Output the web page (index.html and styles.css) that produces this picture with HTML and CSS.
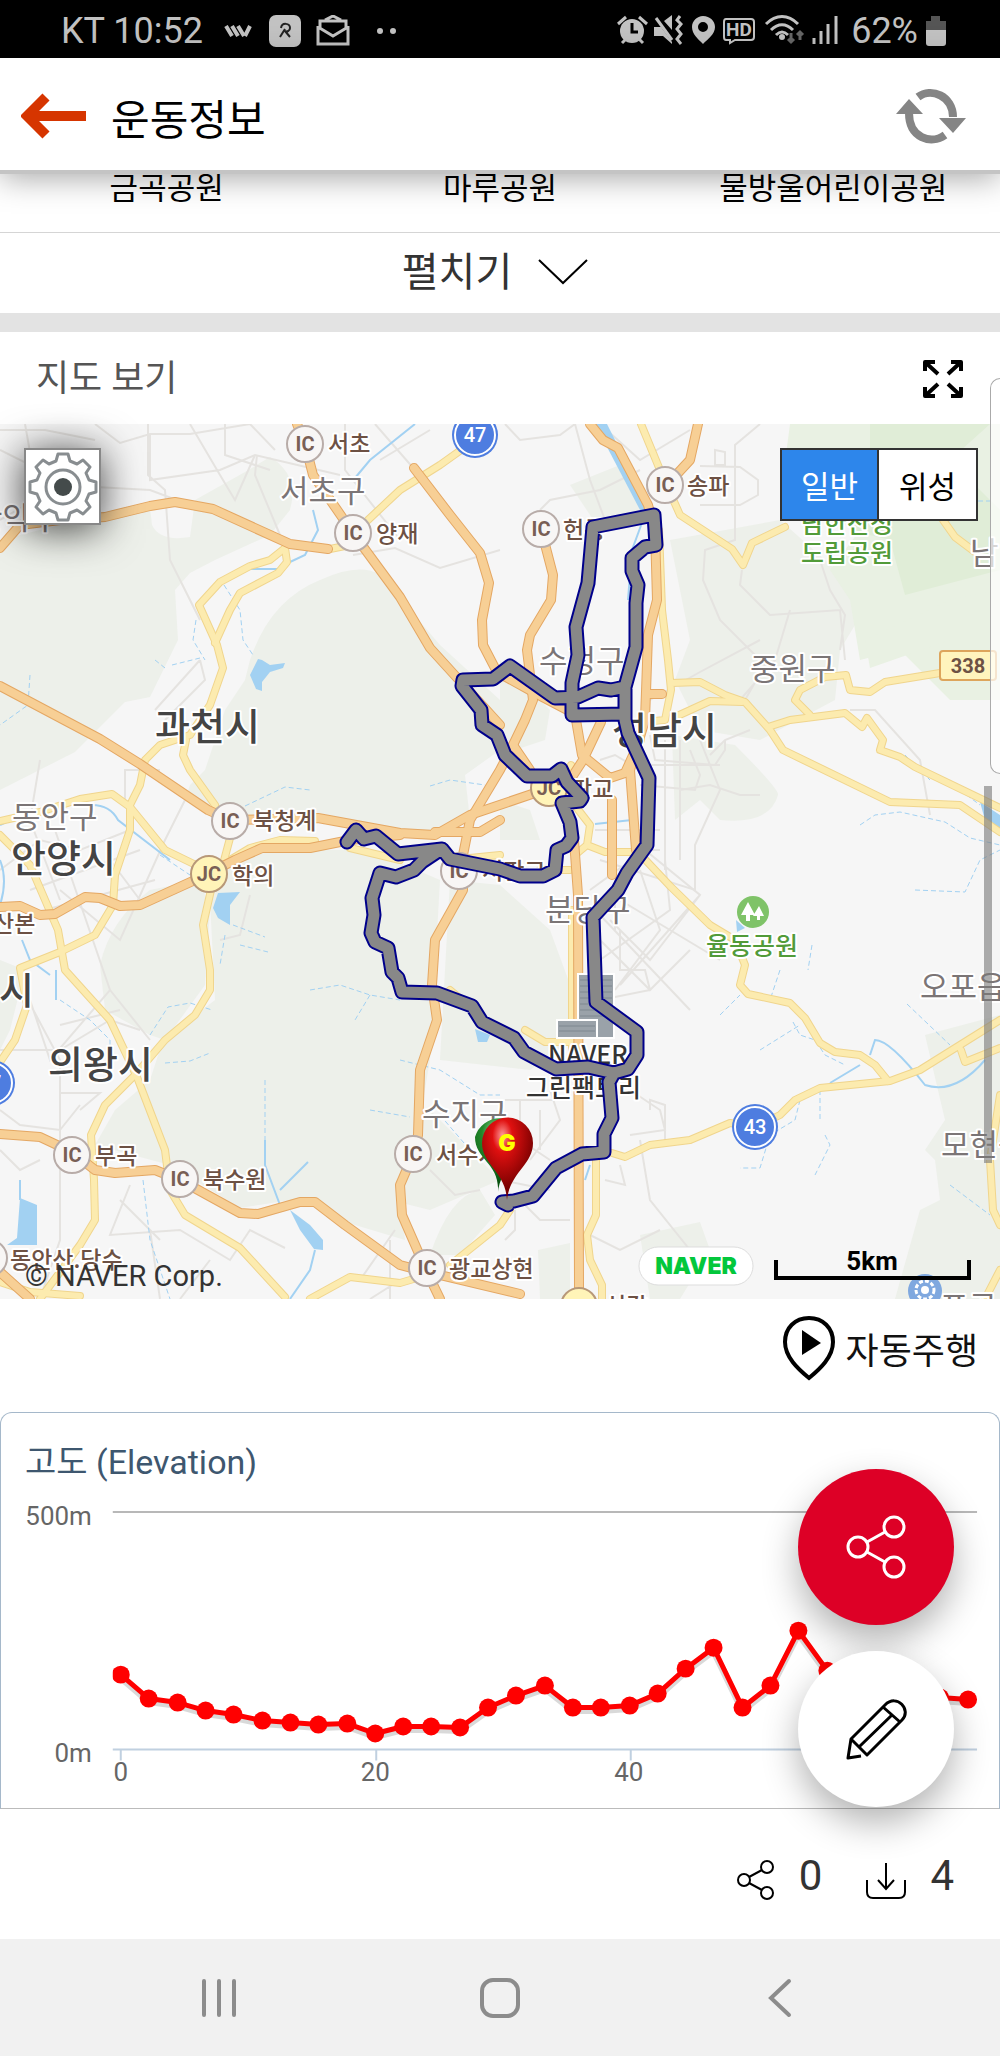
FILE: index.html
```html
<!DOCTYPE html>
<html lang="ko">
<head>
  <meta charset="UTF-8">
  <meta name="viewport" content="width=device-width, initial-scale=1.0">
  <title>운동정보</title>
  <link rel="stylesheet" href="styles.css">
</head>
<body>
  <div class="status-bar">
    <div class="status-group">
      <span>KT 10:52</span>
      <svg class="status-logo" width="28" height="12" viewBox="0 0 28 12" fill="none" stroke="currentColor" stroke-width="4">
        <path d="M2 1l6 10M8 1l6 10M14 1l6 10M21 11l5-10"/>
      </svg>
      <svg width="32" height="32" viewBox="0 0 32 32">
        <rect width="32" height="32" rx="7" fill="currentColor"/>
        <path d="M12 13c1-6 9-5 9 0 0 3-3 4-5 3M16 14l-5 8M16 16l5 6" fill="none" stroke="#222" stroke-width="2"/>
      </svg>
      <svg width="34" height="32" viewBox="0 0 34 32" fill="none" stroke="currentColor" stroke-width="3">
        <path d="M2 11v18h30V11M4 14V6h26v8M2 12l15 9 15-9M9 5l8-4 8 4"/>
      </svg>
      <svg class="status-dots" width="20" height="8" viewBox="0 0 20 8" fill="currentColor">
        <circle cx="3" cy="4" r="3"/><circle cx="16" cy="4" r="3"/>
      </svg>
    </div>
    <div class="status-group status-right">
      <svg width="226" height="32" viewBox="618 15 226 32" fill="currentColor">
        <!-- alarm -->
        <circle cx="633" cy="31" r="12"/>
        <path d="M619 24l8-7M648 24l-8-7M623 43l4-4M644 43l-4-4" stroke="currentColor" stroke-width="3"/>
        <path d="M633 23v9h6" fill="none" stroke="#000" stroke-width="3"/>
        <!-- muted sound -->
        <path d="M655 27h7l11 15v2l-9-8h-9zM665 21l8-6v15z"/>
        <path d="M657 18l16 22" stroke="currentColor" stroke-width="3"/>
        <path d="M681 16l-3 4 4 4-4 5 4 5-4 5 4 5" fill="none" stroke="currentColor" stroke-width="3"/>
        <!-- location -->
        <path fill-rule="evenodd" d="M704 16c7 0 12 5 12 11 0 7-7 12-12 17-5-5-11-10-11-17 0-6 5-11 11-11zm0 6a5 5 0 1 0 0 10 5 5 0 0 0 0-10z"/>
        <!-- hd -->
        <path d="M727 19h25q3 0 3 3v15q0 3-3 3h-16l-5 3v-3h-4q-2 0-2-3V22q0-3 2-3z" fill="none" stroke="currentColor" stroke-width="2"/>
        <text x="727" y="36" class="hd-text">HD</text>
        <!-- wifi -->
        <path d="M767 24c10-10 22-10 32 0M772 30c7-7 15-7 22 0M777 35c4-4 8-4 12 0" fill="none" stroke="currentColor" stroke-width="3"/>
        <circle cx="783" cy="37" r="3"/>
        <path d="M792 33v9m-3-3l3 3 3-3M801 40v-8m-3 3l3-3 3 3" fill="none" stroke="#666" stroke-width="3"/>
        <!-- signal -->
        <path d="M815 38v6M822 31v13M829 24v20M837 16v28" stroke="currentColor" stroke-width="3"/>
      </svg>
      <span>62%</span>
      <svg width="20" height="30" viewBox="0 0 20 30">
        <path d="M0 14V5h5V0h9v5h6v9z" fill="#555"/>
        <path d="M0 14h20v13q0 3-3 3H3q-3 0-3-3z" fill="currentColor"/>
      </svg>
    </div>
  </div>

  <header class="app-header">
    <button class="icon-btn" type="button" aria-label="뒤로">
      <svg width="66" height="46" viewBox="0 0 66 46">
        <path d="M65 23H10M25 4L6 23l19 19" fill="none" stroke="#d63500" stroke-width="10"/>
      </svg>
    </button>
    <h1>운동정보</h1>
    <button class="icon-btn" type="button" aria-label="새로고침">
      <svg width="70" height="56" viewBox="0 0 70 56">
        <path d="M22 9C35-1 57 8 57 29M49 47C35 57 13 50 13 25" fill="none" stroke="#858585" stroke-width="8"/>
        <path d="M43 30h27L57 45zM0 26h27L13 11z" fill="#858585"/>
      </svg>
    </button>
  </header>

  <main>
    <section class="places">
      <span>금곡공원</span>
      <span>마루공원</span>
      <span>물방울어린이공원</span>
    </section>
    <button class="expand-btn" type="button">
      펼치기
      <svg width="50" height="26" viewBox="0 0 50 26" fill="none" stroke="#000" stroke-width="2">
        <path d="M1 1l24 23L49 1"/>
      </svg>
    </button>

    <section class="map-section">
      <div class="map-heading">
        <h2>지도 보기</h2>
        <button class="icon-btn" type="button" aria-label="전체 화면">
          <svg width="42" height="40" viewBox="0 0 42 40" fill="none" stroke="#000" stroke-width="4" stroke-linejoin="round">
            <path d="M16 15L3 3m0 9V3h10M26 15L39 3m-10 0h10v9M16 25L3 37m0-9v9h10M26 25l13 12m-10 0h10v-9"/>
          </svg>
        </button>
      </div>

      <div class="map">
        <svg class="map-canvas" viewBox="0 424 1000 875" role="img" aria-label="운동 경로 지도">
          <rect y="424" width="1000" height="875" fill="#f6f6f6"/>

          <g class="forest">
            <path d="M0 540L100 515 150 507 152 525Q160 542 190 537L195 500 245 472 270 457Q300 475 290 510L270 535 215 560 190 573 175 590 178 640 150 697 125 702 75 752 0 790z"/>
            <path d="M250 660Q270 600 320 580 360 562 380 575L440 645 500 700 500 750 465 775 470 820 430 832 330 822 230 815 200 805 185 800 190 785 205 770 225 710 245 680z"/>
            <path d="M100 965Q110 920 150 890L200 880 210 910 205 985 165 1040 150 1035 105 1010z"/>
            <path d="M240 850H370L440 880 435 970 430 1060 418 1130 400 1190 405 1240 345 1222 310 1197 240 1208 170 1165 95 1145 115 1110 150 1080 163 1040 215 1000 210 900z"/>
            <path d="M450 880L500 885 550 930 572 990V1040L530 1070 440 1060z"/>
            <path d="M500 660L550 710 545 740 515 750 500 730zM500 800L530 810 540 840 500 840z"/>
            <path d="M570 485L620 465 640 510 600 530zM670 540L780 520 870 600 840 650 835 700 760 740 700 730 675 680 690 640z"/>
            <path d="M672 735L735 745Q780 790 778 795 770 825 720 820L700 800 675 820z"/>
            <path d="M925 1035L1000 1015V1299H895L920 1210 940 1200 935 1160 925 1150 945 1120z"/>
            <path d="M640 1235L700 1222 710 1250 680 1299 650 1299zM430 1255Q450 1195 480 1190L495 1215 460 1255zM538 1250L570 1243V1299H540z"/>
            <path d="M0 960L25 970 10 1030 0 1050zM370 1195L430 1110 500 1180 430 1210z"/>
          </g>
          <g class="park">
            <path d="M790 424H1000V700L950 700 900 650 860 660 850 600 830 570 860 530 780 500z"/>
            <path d="M865 640L950 600 1000 590V680L950 640 870 668z"/>
          </g>
          <path d="M870 424H990L950 460 1000 510V570L905 595 890 540 850 530 870 470z" fill="#e0edd7"/>

          <g class="street">
            <path d="M0 430L45 430 95 440M25 424L35 480 80 470M0 520L60 485 150 490 190 505M95 424L120 443 150 434H190L250 424M148 424V475L165 490 170 560 200 620M0 450L100 500M150 434L150 480 220 470 255 455 340 475M190 424L220 475 235 500 255 455M225 424V455L270 470M250 424L275 450M257 455L255 475 280 535M345 424V470L400 540M375 424L415 470M380 460L430 430M353 555L395 548 440 568 500 550"/>
            <path d="M505 424L520 440 560 435 575 424M575 424L590 480 605 520M600 424L640 460 690 430M540 510L550 500 600 490 640 470M700 466L740 467 758 480V495L740 505H700M760 424L735 445V540L705 550 703 580 720 620 765 665 745 700M715 450V465H725V452zM742 570L740 585 770 615 840 610 845 660M820 560L830 590 845 615 840 650M790 610L775 660 740 700M650 700L700 672 760 640"/>
            <path d="M650 735L655 760 715 765 725 750V740M665 740V870M680 740V860M640 765H720M690 750L700 775 695 790 640 785M700 740L720 790 695 845V890L600 860M760 795L740 795 710 785 680 790M750 730L725 740 710 755M850 710L875 710 920 760 930 815"/>
            <path d="M600 760L615 755 640 770M590 890L645 850 700 895 650 960 610 920M600 915L690 1010M620 900L720 960M640 870L660 930 615 990M600 940L650 990 690 950M665 860L670 910 600 960M700 895L620 985M615 870V930M595 830H660M595 850H660M600 1000L650 990 645 970H620V930M630 1090L660 1110 665 1130 630 1135M650 1110V1100L665 1105V1140M640 1140L650 1200 690 1250M605 1180L625 1185 620 1165M590 1235L620 1250 660 1230"/>
            <path d="M505 1100L560 1100M520 1100V1140L550 1160M540 1110V1150M530 1160L560 1120 550 1090M520 1200L540 1220H570M500 1180L550 1190M505 1240L515 1230V1210"/>
            <path d="M40 760L30 820 60 900M55 830L110 990M0 870L40 840 80 850 130 830M30 890L140 850M45 910L155 880M60 890L120 940 165 840 185 800M110 860L140 900M125 800V770L160 770M155 710L200 660M165 720L205 680 200 660M250 895L240 935 220 940M0 1050H60L110 1020 140 1030M30 1000L50 1060 110 990 150 1040M20 985L60 1060V1240L40 1299M0 1110L20 1125 60 1130 80 1105M60 1093H100L80 1110M60 1025L120 1010M0 1150L20 1170 40 1160M130 1185L110 1235 180 1230 230 1260 250 1230 285 1248M210 1260L180 1299M150 1230L160 1299M120 1200L160 1240M390 1240V1299M430 1170L455 1195 480 1190M360 1280L395 1230M400 1280L370 1299"/>
          </g>

          <g class="water">
            <path d="M595 424L607 424 650 510 640 510z"/>
            <path d="M250 675L258 659 262 660 270 665 285 663 283 668 270 672 262 682 262 691 256 689z"/>
            <path d="M213 908L218 893 240 892 230 905V925L218 918zM20 1198L37 1205V1245H7L17 1238zM290 1210L310 1225 323 1240V1250L314 1249 300 1230zM475 1029L490 1035 487 1042 478 1042zM980 802L1000 815V832L985 820zM736 920L745 928 737 932z"/>
          </g>
          <g class="stream">
            <path d="M415 424L370 460 355 478M313 510L318 530 305 555 290 562M245 569H280M643 520L632 550 628 600M92 805Q110 805 118 820L170 860M0 825L15 818M0 860Q8 880 0 905M22 940L30 960 50 975M56 970V1000M20 1180V1200M265 1140V1165L280 1205M280 1190L308 1162M315 1250L310 1270 290 1299M870 1055L875 1040Q890 1040 925 1085 955 1095 985 1060M830 1083L860 1065M595 824L632 820M585 1180L590 1165"/>
          </g>
          <g class="stream stream-dashed">
            <path d="M224 585L240 610 243 640 253 655M196 620L193 640 205 660M155 660L165 668M172 665L200 658M30 675L28 705 0 725M245 806L285 787 310 790M430 786L450 780 485 785M160 855L190 875M225 935L220 965M233 925L265 937M240 945L268 952M165 1063L190 1061 210 1053M150 1035L168 1007 190 1003 212 1010M60 1000L90 1020 110 1040V1060M310 990L340 985 370 995 400 1000M370 995L355 1020M400 1060L440 1070 480 1095H500M370 1110L410 1117M265 1080V1140M143 1180L150 1240 170 1299M440 1115L470 1150"/>
            <path d="M860 825L875 815 900 812 945 822 970 838 1000 845M915 890L965 892 980 860 1000 850M760 1050L800 1025M720 1015L740 995M780 970L770 1000M812 945L808 970M793 1022L800 1035 815 1040 825 1055 845 1065M820 1090L820 1120M800 1100L795 1120 770 1135 760 1168H740M825 1135L830 1145 815 1175M907 1004L950 1045M950 1185L990 1215M905 755L930 780M960 790L980 805M978 501H990"/>
          </g>

          <!-- road edges first, fills on top -->
          <defs>
            <g id="minor-roads">
              <path d="M330 549L345 546M368 520L400 490 440 465 475 440"/>
              <path d="M285 548L270 560 250 566 220 582 199 605 217 645 223 668 210 705 190 735 160 745 145 760 140 785 130 805 130 830 115 875 113 905 95 935 60 952 20 968 27 1005 15 1040 0 1062"/>
              <path d="M285 548L287 562 278 573 240 593 230 610 215 643M186 740L183 755 190 770 215 805"/>
              <path d="M230 838L222 868M211 890L203 925 210 970 210 990 195 1015 165 1040 135 1075 105 1105 91 1135 94 1180 95 1220 80 1245 40 1299"/>
              <path d="M0 821L40 812 80 799 112 794 130 807 165 850 200 867M230 860L250 848 280 840 315 841M350 848L400 860"/>
              <path d="M0 835L30 865 58 930 65 970 110 1020 137 1077 165 1150 170 1190 185 1215 240 1248 285 1297M0 1282L30 1292 80 1296"/>
              <path d="M641 424L660 470 680 515 732 549 743 565 752 543 785 527M943 520L955 537 975 552"/>
              <path d="M659 530L662 610 668 660 671 690 665 720 655 721M671 683L700 682 725 695 745 702 770 730 783 750 890 802 960 805 1000 832M675 717L710 701 742 702"/>
              <path d="M768 727L790 720 845 713 862 727 867 718 883 740 880 750 900 757 915 767 1000 808M810 715L795 700 800 690 825 677 846 675 850 690 870 692 885 682 940 673"/>
              <path d="M571 765L563 790 590 825 587 845 575 855M587 845L605 852H638L670 886 710 925 735 940 745 965 740 985 748 994 790 1003 805 1018 820 1043 835 1052 860 1055 875 1065 888 1081"/>
              <path d="M612 1153L625 1157 650 1145 690 1140 730 1123 755 1127 780 1115 795 1100 820 1088 890 1081 920 1070 1000 1020M961 1050L965 1062 1000 1048M1000 1095L990 1160 993 1210 1000 1225M1000 1270L985 1299"/>
              <path d="M596 1160V1215L587 1235 590 1260 602 1285V1299M310 1299L350 1277 400 1283 427 1275M450 1265L500 1225 510 1210M572 910V1055M450 860L500 855M525 1030L545 1042H573M450 990L480 1015M540 870H570"/>
            </g>
            <g id="major-roads">
              <path d="M0 548L20 525 60 520 105 517 150 506 175 502 213 509 290 544 328 549"/>
              <path d="M297 424L305 444 313 475 353 533 400 597 430 648 500 725"/>
              <path d="M414 468L450 515 480 553 489 583 482 620 483 645 497 672 535 693 575 714 582 755 610 778 625 773 640 740"/>
              <path d="M541 529L553 575 551 600 530 635 527 650 533 700 525 720 513 745 500 770 470 820 462 860 463 890 435 940 432 985 437 1020 420 1070 418 1135 413 1155 400 1185 402 1215 427 1272 440 1299"/>
              <path d="M590 424L603 440 618 448 648 505 655 530 657 600 648 635 645 720 630 770 636 850M698 424L690 460 665 487M648 694H662M513 745L530 770M601 722L583 760 570 780"/>
              <path d="M0 686L100 739 140 764 208 810 230 820 318 818 400 833 435 835 470 815 535 793M435 832L480 832 500 820"/>
              <path d="M0 907L20 906 40 915 55 914 85 897 100 898 120 906 140 905 195 880 235 860 262 848 310 848 350 840 400 835"/>
              <path d="M0 1134L40 1137 72 1152 95 1170 115 1173 155 1170 180 1180 240 1213 258 1214 300 1202 315 1202 345 1225 400 1265 427 1272 520 1294M0 1272L30 1299"/>
              <path d="M612 800V875M574 840L578 895 579 1290"/>
            </g>
          </defs>
          <use href="#minor-roads" class="minor-edge"/>
          <use href="#minor-roads" class="minor-fill"/>
          <use href="#major-roads" class="major-edge"/>
          <use href="#major-roads" class="major-fill"/>

          <!-- interchange badges -->
          <g class="ic">
            <circle cx="305" cy="444" r="18"/><circle cx="353" cy="533" r="18"/><circle cx="541" cy="529" r="18"/>
            <circle cx="665" cy="485" r="18"/><circle cx="230" cy="821" r="18"/><circle cx="459" cy="871" r="18"/>
            <circle cx="72" cy="1155" r="18"/><circle cx="180" cy="1179" r="18"/><circle cx="413" cy="1154" r="18"/>
            <circle cx="427" cy="1268" r="18"/><circle cx="-11" cy="1258" r="18"/>
            <circle class="jc" cx="209" cy="874" r="18"/><circle class="jc" cx="549" cy="788" r="18"/><circle class="jc" cx="579" cy="1306" r="18"/>
          </g>
          <g class="ic-text">
            <text x="305" y="451">IC</text><text x="353" y="540">IC</text><text x="541" y="536">IC</text>
            <text x="665" y="492">IC</text><text x="230" y="828">IC</text><text x="459" y="878">IC</text>
            <text x="72" y="1162">IC</text><text x="180" y="1186">IC</text><text x="413" y="1161">IC</text>
            <text x="427" y="1275">IC</text><text x="209" y="881">JC</text><text x="549" y="795">JC</text>
          </g>
          <g class="label">
            <text x="328" y="452">서초</text><text x="376" y="542">양재</text><text x="563" y="538">헌릉</text>
            <text x="687" y="494">송파</text><text x="253" y="829">북청계</text><text x="232" y="884">학의</text>
            <text x="482" y="879">서판교</text><text x="571" y="797">판교</text><text x="-7" y="932">산본</text>
            <text x="95" y="1164">부곡</text><text x="203" y="1188">북수원</text><text x="436" y="1163">서수지</text>
            <text x="449" y="1277">광교상현</text><text x="10" y="1268">동안산.당수</text><text x="605" y="1314">신갈</text>
          </g>
          <g class="label district">
            <text x="280" y="502">서초구</text><text x="-26" y="529">관악구</text><text x="539" y="672">수정구</text>
            <text x="750" y="680">중원구</text><text x="12" y="828">동안구</text><text x="545" y="921">분당구</text>
            <text x="422" y="1125">수지구</text><text x="920" y="998">오포읍</text><text x="941" y="1156">모현읍</text>
            <text x="970" y="564">남</text><text x="940" y="1318">포곡</text>
          </g>
          <g class="label city">
            <text x="155" y="740">과천시</text><text x="612" y="744">성남시</text><text x="11" y="872">안양시</text>
            <text x="-36" y="1004">흥시</text><text x="48" y="1078">의왕시</text>
          </g>
          <g class="label nature">
            <text x="801" y="533">남한산성</text><text x="801" y="562">도립공원</text><text x="706" y="955">율동공원</text>
          </g>

          <circle cx="753" cy="912" r="16" fill="#7fc368"/>
          <path d="M748 902l7 13h-5v6h-4v-6h-5zM759 906l5 10h-4v4h-3v-4h-4z" fill="#fff"/>

          <g class="route-badge">
            <circle cx="475" cy="435" r="23"/><circle cx="755" cy="1127" r="23"/><circle cx="-8" cy="1083" r="23"/>
            <circle class="ring" cx="475" cy="435" r="20"/><circle class="ring" cx="755" cy="1127" r="20"/><circle class="ring" cx="-8" cy="1083" r="20"/>
            <text x="475" y="442">47</text><text x="755" y="1134">43</text><text x="-10" y="1090">47</text>
          </g>
          <rect x="940" y="651" width="56" height="29" rx="3" fill="#fff4bd" stroke="#dda55c" stroke-width="2"/>
          <text x="968" y="673" class="road-number">338</text>
          <circle cx="925" cy="1291" r="17" fill="#7fa8df"/>
          <circle cx="925" cy="1290" r="9" fill="none" stroke="#fff" stroke-width="3" stroke-dasharray="4 2"/>
          <circle cx="925" cy="1290" r="4" fill="#fff"/>

          <g fill="#9aa2a9" stroke="#fff" stroke-width="2">
            <path d="M578 974H614V1038H578z"/>
            <path d="M557 1020H597V1038H557z"/>
          </g>
          <path d="M580 980h32M580 986h32M580 992h32M580 998h32M580 1004h32M580 1010h32M580 1016h32M559 1026h36M559 1031h36" stroke="#7f8890"/>
          <g class="label landmark">
            <text x="548" y="1064">NAVER</text><text x="526" y="1097">그린팩토리</text>
          </g>

          <defs>
            <path id="track" d="M508 1205L502 1202 514 1201 533 1196 556 1168 582 1154 604 1152 604 1134 612 1118 609 1082 614 1073 628 1069 637 1055V1032L596 1002 593 917 618 890 627 873 647 845 649 778 628 733 625 720V687L636 647V603L638 585 632 571V558L645 547 656 545 654 515 593 527 588 583 576 627 578 655 572 683V715L625 714M625 687L611 690 598 688 578 697 555 698 510 666 493 679 463 680 462 686 481 710 482 725 497 735 505 755 527 776H552L561 769 567 782 582 798 580 801 562 803 570 822 572 838 566 846 557 850 555 870 543 876H520L500 869 450 859 442 849 398 854 376 836 364 839 356 830 347 842M440 850L422 862 414 870 396 877 380 873 372 898 374 915 371 933 375 942 388 948 392 972 398 978 402 992 437 993 472 1006 482 1022 514 1038 524 1052 556 1069 588 1067 614 1073"/>
          </defs>
          <use href="#track" class="track-edge"/>
          <use href="#track" class="track-fill"/>

          <!-- start and goal pins -->
          <defs>
            <radialGradient id="pin-red" cx="40%" cy="22%" r="65%">
              <stop offset="0" stop-color="#ff9c9c"/><stop offset=".3" stop-color="#e01010"/><stop offset="1" stop-color="#780000"/>
            </radialGradient>
            <radialGradient id="pin-green" cx="40%" cy="22%" r="65%">
              <stop offset="0" stop-color="#a6dba6"/><stop offset=".4" stop-color="#228a2b"/><stop offset="1" stop-color="#07520e"/>
            </radialGradient>
          </defs>
          <path d="M498 1192C500 1163 475 1160 475 1137a26 26 0 0 1 50 0C525 1160 501 1165 498 1192z" fill="url(#pin-green)"/>
          <path d="M507 1200C506 1172 482 1165 482 1143a25 25 0 0 1 51 0C533 1165 510 1172 507 1200z" fill="url(#pin-red)"/>
          <text x="507" y="1151" class="pin-letter">G</text>

          <g class="scale">
            <path d="M776 1260v18h193v-18"/>
            <text x="872" y="1270">5km</text>
          </g>
          <text x="25" y="1286" class="copyright">© NAVER Corp.</text>
          <rect x="639" y="1247" width="114" height="38" rx="19" fill="#fff" stroke="#ddd"/>
          <text x="696" y="1274" class="naver-logo">NAVER</text>
        </svg>

        <button class="gear-btn" type="button" aria-label="지도 설정">
          <svg width="70" height="70" viewBox="0 0 70 70" fill="none" stroke="#888d90" stroke-width="3" stroke-linejoin="round">
            <path d="M28 9l2-7h10l2 7 7 3 6-4 7 7-4 6 3 7 7 2v10l-7 2-3 7 4 6-7 7-6-4-7 3-2 7H30l-2-7-7-3-6 4-7-7 4-6-3-7-7-2V30l7-2 3-7-4-6 7-7 6 4z"/>
            <circle cx="35" cy="35" r="17"/>
            <circle cx="35" cy="35" r="9" fill="#444b4b" stroke="none"/>
          </svg>
        </button>
        <div class="map-type">
          <button class="active" type="button">일반</button>
          <button type="button">위성</button>
        </div>
        <div class="edge-panel"></div>
        <div class="scroll-thumb"></div>
      </div>

      <button class="auto-drive" type="button">
        <svg width="54" height="66" viewBox="0 0 54 66">
          <path d="M27 3C13 3 3 13 3 27c0 15 13 27 24 36 11-9 24-21 24-36C51 13 41 3 27 3z" fill="none" stroke="#000" stroke-width="4"/>
          <path d="M20 15l19 13-19 12z"/>
        </svg>
        자동주행
      </button>
    </section>

    <section class="elevation">
      <h2>고도 (Elevation)</h2>
      <svg class="chart" viewBox="0 1488 1000 320" role="img" aria-label="고도 그래프">
        <defs>
          <marker id="dot" markerUnits="userSpaceOnUse" markerWidth="20" markerHeight="20" refX="10" refY="10">
            <circle cx="10" cy="10" r="9" fill="#f00"/>
          </marker>
          <clipPath id="plot"><path d="M112 1500H978V1760H112z"/></clipPath>
        </defs>
        <path d="M112 1511H978" stroke="#b8b8b8" stroke-width="2"/>
        <path d="M112 1749H978M120 1749v11M376 1749v11M631 1749v11" stroke="#c0d0e0" stroke-width="2"/>
        <g clip-path="url(#plot)">
          <polyline class="line-shadow" points="120,1677 148,1701 177,1705 205,1713 233,1717 262,1723 290,1725 318,1727 347,1726 375,1736 403,1729 431,1729 460,1730 488,1710 516,1698 545,1688 573,1710 601,1710 630,1708 658,1696 686,1671 714,1650 743,1710 771,1688 799,1633 828,1673 856,1692 884,1702 912,1702 941,1700 969,1702"/>
          <polyline class="line" points="120,1674 148,1698 177,1702 205,1710 233,1714 262,1720 290,1722 318,1724 347,1723 375,1733 403,1726 431,1726 460,1727 488,1707 516,1695 545,1685 573,1707 601,1707 630,1705 658,1693 686,1668 714,1647 743,1707 771,1685 799,1630 828,1670 856,1690 884,1700 912,1700 941,1697 969,1699"/>
        </g>
        <g class="axis">
          <text x="91" y="1524" text-anchor="end">500m</text>
          <text x="91" y="1762" text-anchor="end">0m</text>
          <text x="120" y="1781" text-anchor="middle">0</text>
          <text x="375" y="1781" text-anchor="middle">20</text>
          <text x="629" y="1781" text-anchor="middle">40</text>
        </g>
      </svg>
      <div class="fabs">
        <button class="fab fab-share" type="button" aria-label="공유">
          <svg width="60" height="64" viewBox="0 0 60 64" fill="none" stroke="currentColor" stroke-width="3">
            <circle cx="12" cy="32" r="10"/><circle cx="48" cy="12" r="10"/><circle cx="48" cy="52" r="10"/>
            <path d="M21 27l18-10M21 37l18 10"/>
          </svg>
        </button>
        <button class="fab" type="button" aria-label="편집">
          <svg width="62" height="62" viewBox="0 0 62 62" fill="none" stroke="#000" stroke-width="3" stroke-linejoin="round">
            <path d="M6 41L40 7c12-12 27 5 17 15L22 57 6 41 3 60l13-2M38 9l17 15M48 16L15 48"/>
          </svg>
        </button>
      </div>
    </section>

    <section class="counts">
      <a href="#share" aria-label="공유 0">
        <svg width="38" height="40" viewBox="0 0 38 40" fill="none" stroke="#000" stroke-width="2">
          <circle cx="7" cy="20" r="6"/><circle cx="30" cy="7" r="6"/><circle cx="30" cy="33" r="6"/>
          <path d="M12 17l13-7M12 23l13 7"/>
        </svg>
        <span>0</span>
      </a>
      <a href="#download" aria-label="다운로드 4">
        <svg width="40" height="40" viewBox="0 0 40 40" fill="none" stroke="#000" stroke-width="2">
          <path d="M20 3v26m-8-9l8 9 8-9M1 20v12q0 6 6 6h26q6 0 6-6V20"/>
        </svg>
        <span>4</span>
      </a>
    </section>
  </main>

  <nav class="system-nav">
    <button type="button" aria-label="최근 앱">
      <svg width="40" height="40" viewBox="0 0 40 40"><path d="M4 3v34M19 3v34M34 3v34"/></svg>
    </button>
    <button type="button" aria-label="홈">
      <svg width="40" height="40" viewBox="0 0 40 40"><rect x="2" y="2" width="36" height="36" rx="11"/></svg>
    </button>
    <button type="button" aria-label="이전">
      <svg width="40" height="40" viewBox="0 0 40 40"><path d="M29 3L11 20l18 17"/></svg>
    </button>
  </nav>
</body>
</html>
```

FILE: styles.css
```css
:root {
  --text: #333;
  --status: #c2c2c2;
  --brand-red: #dd0026;
  --blue: #2d86eb;
  --kr: Roboto, "Noto Sans CJK KR", sans-serif;
}

* {
  margin: 0;
  padding: 0;
  box-sizing: border-box;
}

body {
  font-family: var(--kr);
  background: #fff;
  color: var(--text);
  overflow-x: hidden;
}

button {
  font: inherit;
  color: inherit;
  background: none;
  border: 0;
  cursor: pointer;
}

svg {
  display: block;
  flex-shrink: 0;
}

.status-bar {
  display: flex;
  justify-content: space-between;
  align-items: center;
  height: 58px;
  padding: 4px 54px 0 61px;
  background: #000;
  color: var(--status);
  font-size: 36px;
  line-height: 54px;
}

.status-group {
  display: flex;
  align-items: center;
  gap: 15px;
}

.status-logo {
  margin: 0 2px 0 6px;
}

.status-dots {
  margin-left: 12px;
}

.status-right {
  gap: 8px;
}

.hd-text {
  font-size: 19px;
  font-weight: 700;
}

.app-header {
  display: flex;
  align-items: center;
  height: 116px;
  padding: 4px 34px 0 21px;
  position: relative;
  z-index: 2;
  background: #fff;
  border-bottom: 4px solid #c4c4c4;
  box-shadow: 0 4px 30px rgba(0, 0, 0, 0.35);
}

.app-header h1 {
  flex: 1;
  margin-left: 24px;
  font-size: 42px;
  font-weight: 400;
  color: #000;
}

.places {
  display: grid;
  grid-template-columns: repeat(3, 1fr);
  height: 59px;
  border-bottom: 1px solid #d5d5d5;
  font-size: 31px;
  line-height: 30px;
  text-align: center;
  color: #000;
}

.expand-btn {
  display: flex;
  align-items: center;
  justify-content: center;
  gap: 26px;
  width: 100%;
  height: 80px;
  padding: 0 10px 8px 0;
  font-size: 40px;
}

.expand-btn svg {
  margin-top: 6px;
}

.map-section {
  border-top: 19px solid #e3e3e3;
}

.map-heading {
  display: flex;
  align-items: center;
  justify-content: space-between;
  height: 92px;
  padding: 0 36px 6px;
}

.map-heading h2 {
  font-size: 36px;
  font-weight: 400;
  color: #555;
}

.map-heading svg {
  margin-top: 8px;
}

.map {
  position: relative;
}

.map-canvas {
  width: 100%;
  height: auto;
}

.forest {
  fill: #edf0ea;
}

.park {
  fill: #e9f1e3;
}

.street {
  fill: none;
  stroke: #e5e3e0;
  stroke-width: 2;
}

.water {
  fill: #a2d1f2;
}

.stream {
  fill: none;
  stroke: #a2d1f2;
  stroke-width: 2;
}

.stream-dashed {
  stroke-width: 1;
  stroke-dasharray: 5 3;
}

.minor-edge,
.minor-fill,
.major-edge,
.major-fill,
.track-edge,
.track-fill {
  fill: none;
  stroke-linejoin: round;
  stroke-linecap: round;
}

.minor-edge {
  stroke: #f0d58d;
  stroke-width: 8;
}

.minor-fill {
  stroke: #fcebaf;
  stroke-width: 6;
}

.major-edge {
  stroke: #e4a763;
  stroke-width: 10;
}

.major-fill {
  stroke: #f7cf95;
  stroke-width: 8;
}

.track-edge {
  stroke: #00008b;
  stroke-width: 15;
}

.track-fill {
  stroke: #888;
  stroke-width: 11;
}

.ic circle {
  fill: #f8f6f5;
  stroke: #b8aca8;
  stroke-width: 2;
}

.ic .jc {
  fill: #fff4b8;
  stroke: #b89878;
}

.ic-text {
  font-size: 20px;
  font-weight: 700;
  text-anchor: middle;
  fill: #795f55;
}

.label {
  font-family: "Noto Sans CJK KR", sans-serif;
  font-size: 23px;
  font-weight: 500;
  fill: #6d5144;
  stroke: #fff;
  stroke-width: 4;
  stroke-linejoin: round;
  paint-order: stroke;
}

.district {
  font-size: 31px;
  font-weight: 400;
  fill: #7b7576;
}

.city {
  font-size: 38px;
  fill: #444;
}

.nature {
  font-size: 25px;
  fill: #529b39;
}

.landmark {
  font-size: 25px;
  fill: #333;
}

.route-badge circle {
  fill: #4e7de0;
}

.route-badge .ring {
  fill: none;
  stroke: #fff;
  stroke-width: 2;
}

.route-badge text,
.road-number {
  font-size: 20px;
  font-weight: 500;
  text-anchor: middle;
  fill: #fff;
}

.road-number {
  font-weight: 700;
  fill: #6d5144;
}

.pin-letter {
  font-family: Inter, sans-serif;
  font-size: 23px;
  font-weight: 900;
  text-anchor: middle;
  fill: #ff0;
}

.scale path {
  fill: none;
  stroke: #000;
  stroke-width: 4;
}

.scale text {
  font-size: 26px;
  font-weight: 700;
  text-anchor: middle;
  fill: #000;
}

.copyright {
  font-size: 29px;
  fill: #333;
}

.naver-logo {
  font-family: Inter, sans-serif;
  font-size: 23px;
  font-weight: 900;
  text-anchor: middle;
  fill: #03c73c;
}

/* controls lying over the map */
.gear-btn {
  position: absolute;
  top: 24px;
  left: 24px;
  display: grid;
  place-items: center;
  width: 77px;
  height: 77px;
  background: #fff;
  border: 2px solid #888;
  box-shadow: 0 4px 40px rgba(0, 0, 0, 0.75);
}

.map-type {
  position: absolute;
  top: 24px;
  right: 22px;
  display: flex;
  border: 2px solid #333;
  background: #fff;
  font-size: 31px;
  color: #000;
}

.map-type button {
  width: 97px;
  height: 69px;
}

.map-type .active {
  background: var(--blue);
  border-right: 2px solid #333;
  color: #fff;
}

.edge-panel {
  position: absolute;
  top: -46px;
  right: 0;
  width: 10px;
  height: 396px;
  background: rgba(255, 255, 255, 0.7);
  border: 1px solid #aaa;
  border-right: 0;
  border-radius: 10px 0 0 10px;
}

.scroll-thumb {
  position: absolute;
  top: 362px;
  right: 8px;
  width: 8px;
  height: 377px;
  background: rgba(120, 120, 120, 0.6);
}

.auto-drive {
  display: flex;
  align-items: center;
  gap: 10px;
  height: 113px;
  margin-left: auto;
  padding: 0 22px 16px 0;
  font-size: 36px;
  color: #111;
}

.elevation {
  position: relative;
  border: 1px solid #a5b8ca;
  border-bottom-color: #bbb;
  border-radius: 12px 12px 0 0;
}

.elevation h2 {
  height: 76px;
  padding: 24px 24px 0;
  font-size: 34px;
  font-weight: 400;
  line-height: 50px;
  color: #3e576f;
}

.chart {
  width: 100%;
  height: auto;
}

.line,
.line-shadow {
  fill: none;
  stroke-linejoin: round;
}

.line {
  stroke: #f00;
  stroke-width: 5;
  marker-start: url(#dot);
  marker-mid: url(#dot);
  marker-end: url(#dot);
}

.line-shadow {
  stroke: rgba(0, 0, 0, 0.15);
  stroke-width: 7;
}

.axis {
  font-size: 26px;
  fill: #666;
}

.fabs {
  position: absolute;
  right: 45px;
  bottom: 1px;
  display: grid;
  gap: 26px;
}

.fab {
  display: grid;
  place-items: center;
  width: 156px;
  height: 156px;
  border-radius: 50%;
  background: #fff;
  box-shadow: 0 16px 36px rgba(0, 0, 0, 0.3);
}

.fab-share {
  background: var(--brand-red);
  color: #fff;
}

.counts {
  display: flex;
  justify-content: flex-end;
  align-items: center;
  gap: 44px;
  height: 130px;
  padding: 4px 46px 0 0;
}

.counts a {
  display: flex;
  align-items: center;
  gap: 24px;
  font-size: 42px;
  line-height: 48px;
  color: inherit;
  text-decoration: none;
}

.counts svg {
  margin-top: 8px;
}

.system-nav {
  display: flex;
  justify-content: center;
  gap: 240px;
  height: 117px;
  background: #f1f1f1;
}

.system-nav svg {
  fill: none;
  stroke: #8c8c8c;
  stroke-width: 4;
  stroke-linecap: round;
}
```
